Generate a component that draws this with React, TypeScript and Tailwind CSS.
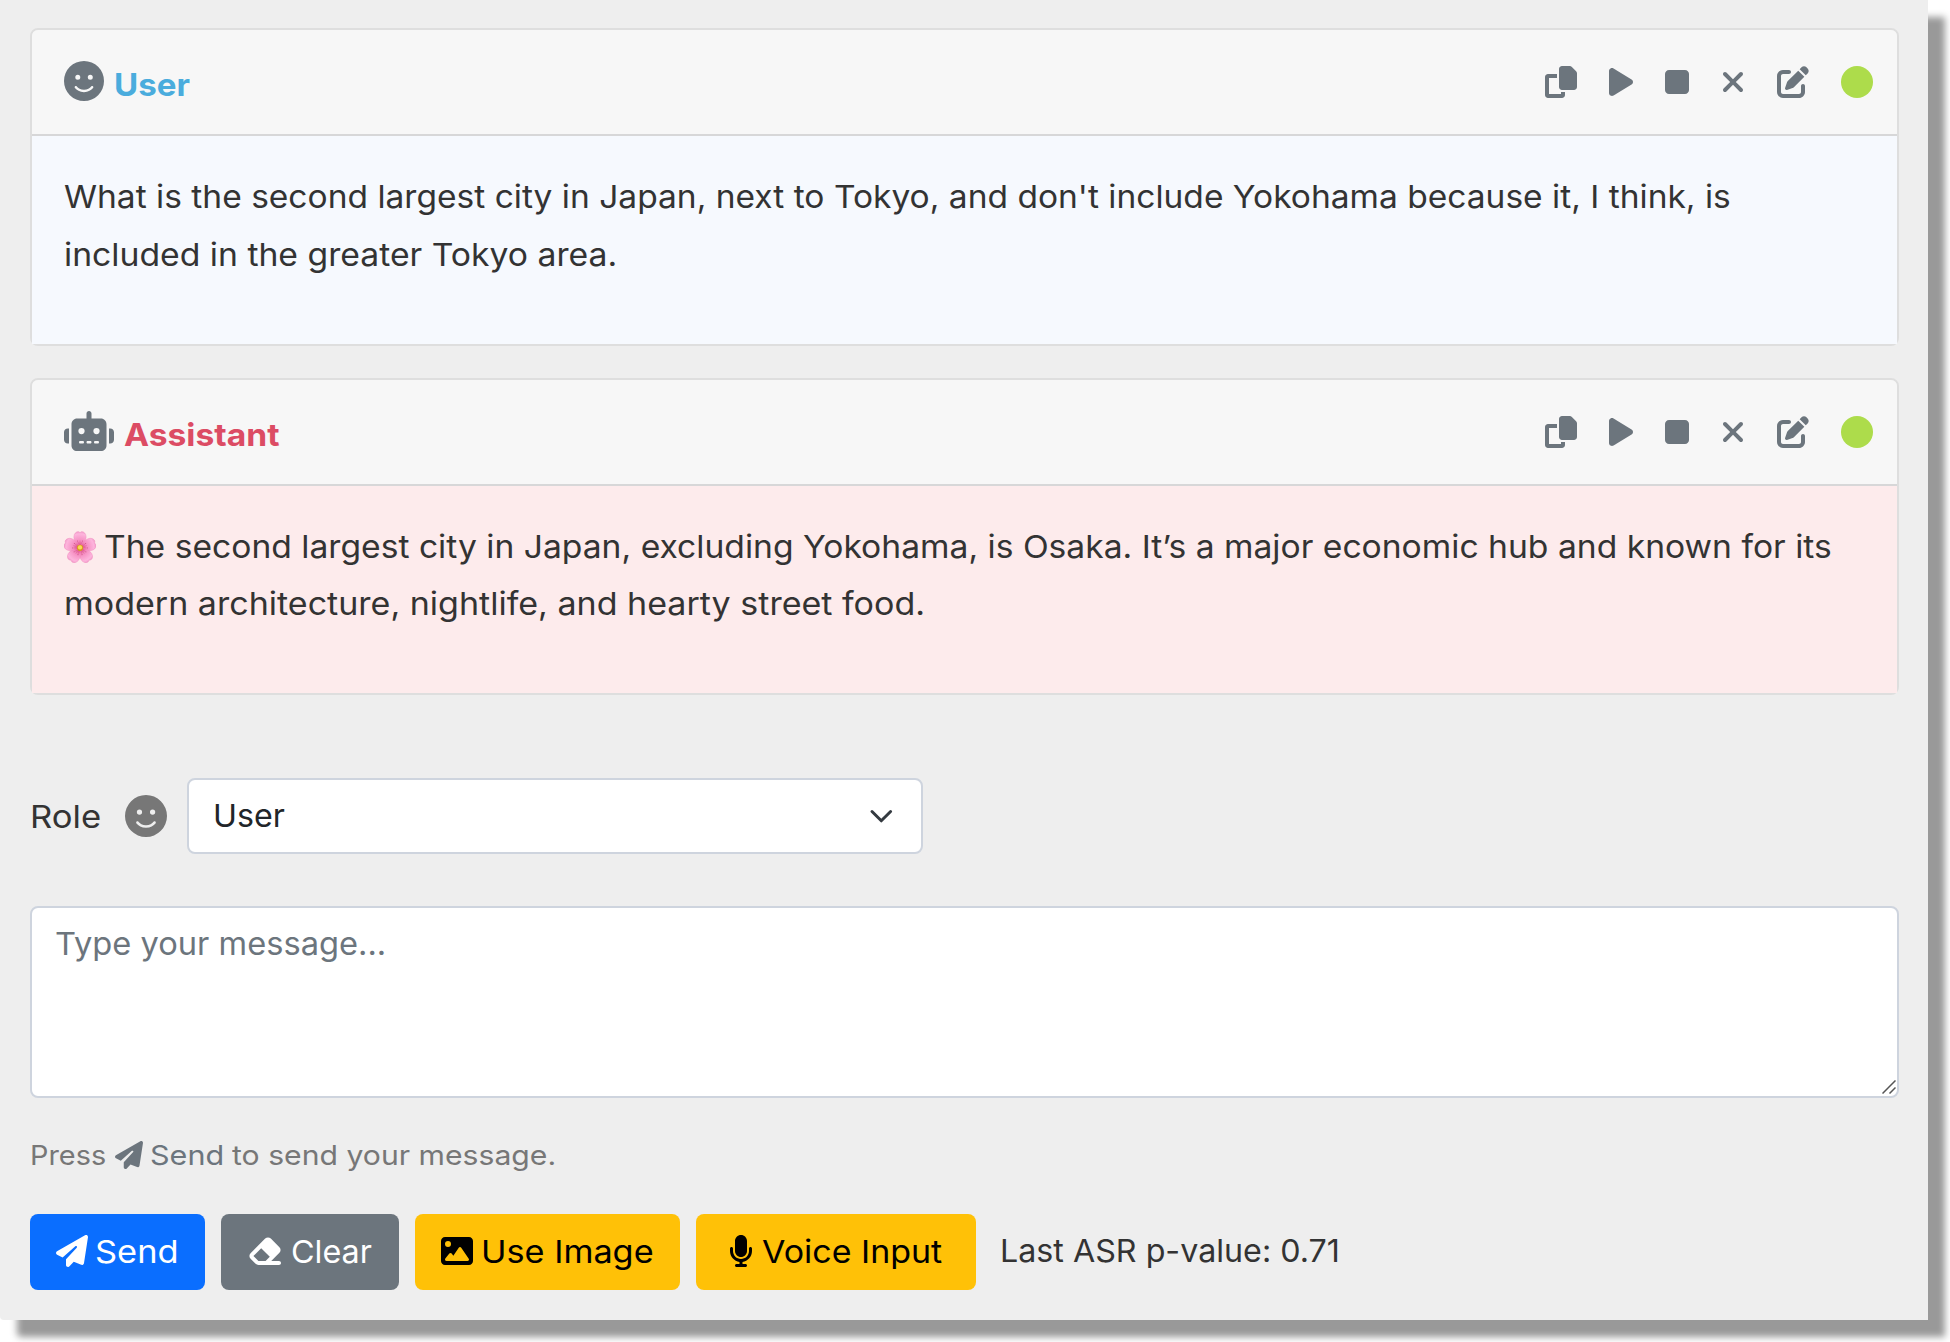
import type { ReactNode } from "react";
import {
  FaCircle,
  FaEraser,
  FaFaceSmile,
  FaImage,
  FaMicrophone,
  FaPaperPlane,
  FaPenToSquare,
  FaPlay,
  FaRobot,
  FaStop,
  FaXmark,
} from "react-icons/fa6";

function CopyIcon() {
  return (
    <svg viewBox="0 0 512 512" className="h-8 w-8" fill="currentColor">
      <path d="M272 0H396.1c12.7 0 24.9 5.1 33.9 14.1l67.9 67.9c9 9 14.1 21.2 14.1 33.9V336c0 26.5-21.5 48-48 48H272c-26.5 0-48-21.5-48-48V48c0-26.5 21.5-48 48-48zM48 128H192v64H64V448H256V416h64v48c0 26.5-21.5 48-48 48H48c-26.5 0-48-21.5-48-48V176c0-26.5 21.5-48 48-48z" />
    </svg>
  );
}

const petalAngles = [0, 72, 144, 216, 288];

function Blossom() {
  return (
    <svg viewBox="0 0 32 32" className="h-8 w-8 shrink-0">
      <defs>
        <radialGradient id="petal" gradientUnits="userSpaceOnUse" cx="16" cy="16.5" r="16">
          <stop offset="0.15" stopColor="#e0588f" />
          <stop offset="0.4" stopColor="#f58cc0" />
          <stop offset="0.85" stopColor="#fdb4dc" />
          <stop offset="1" stopColor="#f39ccb" />
        </radialGradient>
      </defs>
      {petalAngles.map((a) => (
        <g key={a} transform={`rotate(${a} 16 16.8)`}>
          <path
            d="M16 16.8C12.2 13.6 9.6 9 9.9 5.4C10.1 2.6 12 .7 14.2 .6L16 1.5L17.8 .6C20 .7 21.9 2.6 22.1 5.4C22.4 9 19.8 13.6 16 16.8Z"
            fill="url(#petal)"
            stroke="#ee86bb"
            strokeWidth="0.4"
          />
          <path d="M16 14V9.5M15 13L13.8 10.8M17 13L18.2 10.8" stroke="#d85a94" strokeWidth="0.4" />
          <circle cx="13.6" cy="10" r="0.45" fill="#b43a64" />
          <circle cx="18.4" cy="10" r="0.45" fill="#b43a64" />
        </g>
      ))}
      <circle cx="16" cy="16.8" r="3.1" fill="#d99a1c" />
      <circle cx="16" cy="16.4" r="2.1" fill="#f9dc58" />
    </svg>
  );
}

function Actions() {
  return (
    <div className="flex items-center gap-8 text-[#6c757d]">
      <CopyIcon />
      <FaPlay className="h-8 w-6" />
      <FaStop className="h-8 w-6" />
      <FaXmark className="h-8 w-6" />
      <FaPenToSquare className="h-8 w-8" />
      <FaCircle className="h-8 w-8 text-[#addc4b]" />
    </div>
  );
}

function Card({ icon, label, body, children }: { icon: ReactNode; label: ReactNode; body: string; children: ReactNode }) {
  return (
    <section className="rounded-lg border-2 border-[#dedede]">
      <header className="flex h-[106px] items-center justify-between rounded-t-md border-b-2 border-[#d7d7d8] bg-[#f7f7f7] pr-6 pl-8">
        <div className="flex h-[42px] items-start text-[#6c757d]">
          {icon}
          {label}
        </div>
        <Actions />
      </header>
      <div className={body}>{children}</div>
    </section>
  );
}

export default function App() {
  return (
    <div className="h-[1342px] w-[1950px] overflow-hidden bg-white font-['Inter',sans-serif] text-[31.5px] whitespace-nowrap text-[#333]">
      <main className="flex h-[1320px] w-[1928px] flex-col rounded-bl-sm bg-[#eeeeee] pt-7 pr-[29px] pl-[30px] shadow-[17px_17px_7px_0px_#999999]">
        <Card
          icon={<FaFaceSmile className="h-10 w-10" />}
          label={
            <span className="mt-1 ml-[10px] origin-left scale-x-[1.05] leading-10 font-bold text-[#4aacdd]">User</span>
          }
          body="h-[208px] bg-[#f6f9fe] pt-8 pl-8 leading-[57.6px]"
        >
          <p className="w-fit origin-left scale-x-[1.0645]">
            What is the second largest city in Japan, next to Tokyo, and don't include Yokohama because it, I think, is
          </p>
          <p className="w-fit origin-left scale-x-[1.07]">included in the greater Tokyo area.</p>
        </Card>

        <div className="mt-8">
          <Card
            icon={<FaRobot className="h-10 w-[50px]" />}
            label={
              <span className="mt-1 ml-[10px] origin-left scale-x-[1.067] leading-10 font-bold text-[#dc4c64]">
                Assistant
              </span>
            }
            body="h-[207px] bg-[#fdebec] pt-8 pl-8 leading-[57px]"
          >
            <p className="flex items-center">
              <Blossom />
              <span className="ml-2 origin-left scale-x-[1.0676]">
                The second largest city in Japan, excluding Yokohama, is Osaka. It’s a major economic hub and known for
                its
              </span>
            </p>
            <p className="w-fit origin-left scale-x-[1.08]">modern architecture, nightlife, and hearty street food.</p>
          </Card>
        </div>

        <div className="mt-[83px] flex h-[76px] items-center">
          <span className="mt-px w-[95px] origin-left scale-x-[1.1]">Role</span>
          <FaFaceSmile className="-mt-px h-[42px] w-[42px] text-[#777]" />
          <div className="ml-5 flex h-[76px] w-[736px] items-center justify-between rounded-lg border-2 border-[#ced4de] bg-white pr-6 pl-6 text-[#212529]">
            <span className="origin-left scale-x-[1.023]">User</span>
            <svg viewBox="0 0 32 32" className="h-8 w-8" fill="none" stroke="#343a40" strokeWidth="3">
              <path d="M7 11.5l9.3 9.3 9.3-9.3" strokeLinecap="round" strokeLinejoin="round" />
            </svg>
          </div>
        </div>

        <div className="relative mt-[52px] h-48 rounded-lg border-2 border-[#ced4de] bg-white pt-3 pl-[23px] leading-12 text-[#6c757d]">
          <span className="inline-block origin-left scale-x-[1.036]">Type your message...</span>
          <svg
            viewBox="0 0 14 14"
            className="absolute right-[1px] bottom-[2px] h-[14px] w-[14px]"
            stroke="#555"
            strokeWidth="1.5"
          >
            <path d="M0.5 13.5L13.5 0.5M7.5 13.5L13.5 7.5" />
          </svg>
        </div>

        <div className="mt-[38px] flex h-10 items-center text-[27.5px] text-[#777]">
          <span className="w-[85px] origin-left scale-x-[1.05]">Press</span>
          <FaPaperPlane className="-mt-0.5 h-7 w-7 text-[#6c757d]" />
          <span className="ml-[7px] w-[82px] origin-left scale-x-[1.11] text-[#6c757d]">Send</span>
          <span className="origin-left scale-x-[1.097]">to send your message.</span>
        </div>

        <div className="mt-[38px] flex h-[76px] items-center text-black">
          <button className="flex h-[76px] w-[175px] items-center rounded-lg bg-[#0a6eff] pl-[26px] text-white">
            <FaPaperPlane className="-mt-0.5 h-8 w-8" />
            <span className="ml-[7px] origin-left scale-x-[1.093]">Send</span>
          </button>
          <button className="ml-4 flex h-[76px] w-[178px] items-center rounded-lg bg-[#6c757d] pl-[26px] text-white">
            <FaEraser className="-mt-0.5 h-8 w-9" />
            <span className="ml-2 origin-left scale-x-[1.026]">Clear</span>
          </button>
          <button className="ml-4 flex h-[76px] w-[265px] items-center rounded-lg bg-[#ffc107] pl-[26px]">
            <FaImage className="-mt-0.5 h-8 w-8" />
            <span className="ml-2 origin-left scale-x-[1.0875]">Use Image</span>
          </button>
          <button className="ml-4 flex h-[76px] w-[280px] items-center rounded-lg bg-[#ffc107] pl-[33px]">
            <FaMicrophone className="-mt-0.5 h-8 w-6" />
            <span className="ml-[9px] origin-left scale-x-[1.078]">Voice Input</span>
          </button>
          <span className="-mt-0.5 ml-6 origin-left scale-x-[1.023] text-[#333]">Last ASR p-value: 0.71</span>
        </div>
      </main>
    </div>
  );
}
